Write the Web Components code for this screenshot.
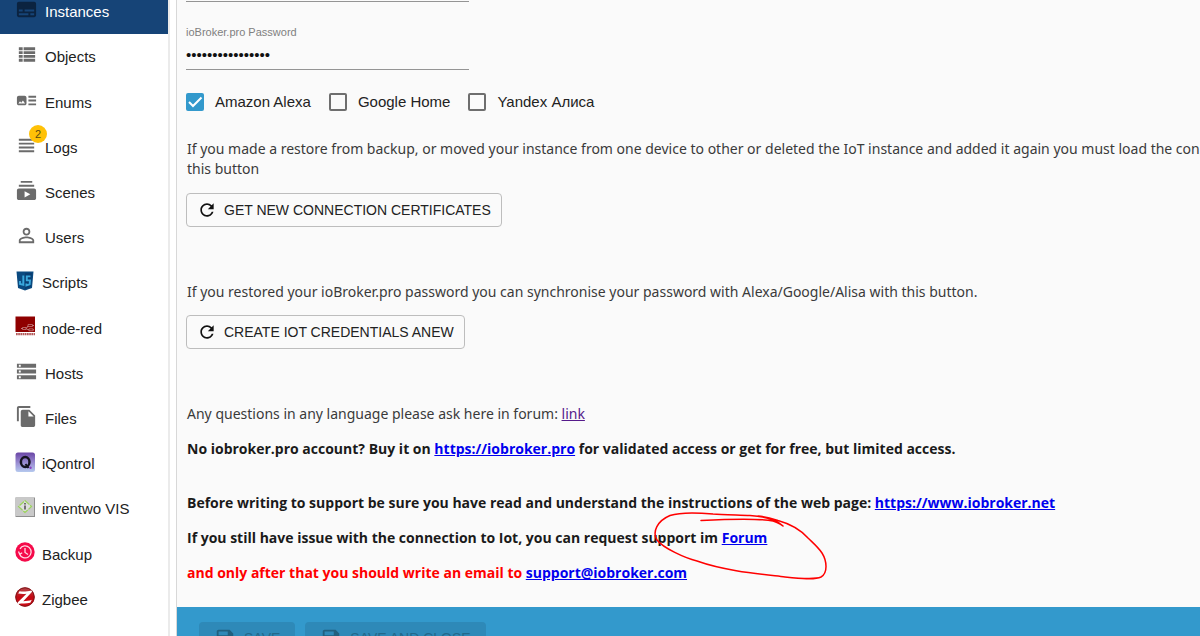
<!DOCTYPE html>
<html lang="en">
<head>
<meta charset="utf-8">
<meta name="viewport" content="width=device-width, initial-scale=1">
<title>ioBroker admin</title>
<style>
  html, body { margin: 0; height: 100%; overflow: hidden; }
  body { background: #fff; color: #222; font-family: "Liberation Sans", Arial, sans-serif; font-size: 15px; }
</style>
</head>
<body>
<io-app>
  <io-sidebar slot="nav">
    <io-nav-item icon="instances" active>Instances</io-nav-item>
    <io-nav-item icon="objects">Objects</io-nav-item>
    <io-nav-item icon="enums">Enums</io-nav-item>
    <io-nav-item icon="logs" badge="2">Logs</io-nav-item>
    <io-nav-item icon="scenes">Scenes</io-nav-item>
    <io-nav-item icon="users">Users</io-nav-item>
    <io-nav-item icon="scripts">Scripts</io-nav-item>
    <io-nav-item icon="nodered">node-red</io-nav-item>
    <io-nav-item icon="hosts">Hosts</io-nav-item>
    <io-nav-item icon="files">Files</io-nav-item>
    <io-nav-item icon="iqontrol">iQontrol</io-nav-item>
    <io-nav-item icon="inventwo">inventwo VIS</io-nav-item>
    <io-nav-item icon="backup">Backup</io-nav-item>
    <io-nav-item icon="zigbee">Zigbee</io-nav-item>
  </io-sidebar>
  <io-settings></io-settings>
  <io-actions slot="footer">
    <io-button icon="save" disabled>SAVE</io-button>
    <io-button icon="save" disabled>SAVE AND CLOSE</io-button>
  </io-actions>
</io-app>

<script>
const mono = d => `<svg class="m" viewBox="0 0 24 24" aria-hidden="true"><path fill="currentColor" d="${d}"/></svg>`;
const pic = body => `<svg class="p" viewBox="0 0 20 20" aria-hidden="true">${body}</svg>`;
const ICONS = {
  instances: mono("M20 4H4c-1.1 0-2 .9-2 2v12c0 1.1.9 2 2 2h16c1.1 0 2-.9 2-2V6c0-1.1-.9-2-2-2zM4 12h4v2H4v-2zm10 6H4v-2h10v2zm6 0h-4v-2h4v2zm0-4H10v-2h10v2z"),
  objects: mono("M4 4.5h4v3H4zM9 4.5h12v3H9zM4 8.5h4v3H4zM9 8.5h12v3H9zM4 12.5h4v3H4zM9 12.5h12v3H9zM4 16.5h4v3H4zM9 16.5h12v3H9z"),
  enums: mono("M22 13h-8v-2h8v2zm0-6h-8v2h8V7zm-8 10h8v-2h-8v2zm-2-8v6c0 1.1-.9 2-2 2H4c-1.1 0-2-.9-2-2V9c0-1.1.9-2 2-2h6c1.1 0 2 .9 2 2zm-1.500 6l-2.250-3-1.750 2.260-1.250-1.510L3.500 15h7z"),
  logs: mono("M4 15h16v-2H4v2zm0 4h16v-2H4v2zm0-8h16V9H4v2zm0-6v2h16V5H4z"),
  scenes: mono("M20 8H4V6h16v2zm-2-6H6v2h12V2zm4 10v8c0 1.1-.9 2-2 2H4c-1.1 0-2-.9-2-2v-8c0-1.1.9-2 2-2h16c1.1 0 2 .9 2 2zm-6 4l-6-3.27v6.53L16 16z"),
  users: mono("M12 5.9c1.16 0 2.1.94 2.1 2.1s-.94 2.1-2.1 2.1S9.900 9.160 9.900 8s.94-2.100 2.100-2.100m0 9c2.970 0 6.100 1.460 6.100 2.100v1.100H5.900V17c0-.64 3.130-2.100 6.100-2.100M12 4C9.790 4 8 5.790 8 8s1.790 4 4 4 4-1.790 4-4-1.790-4-4-4zm0 9c-2.670 0-8 1.340-8 4v3h16v-3c0-2.660-5.330-4-8-4z"),
  hosts: mono("M2 20h20v-4H2v4zm2-3h2v2H4v-2zM2 4v4h20V4H2zm4 3H4V5h2v2zm-4 7h20v-4H2v4zm2-3h2v2H4v-2z"),
  files: mono("M16 1H4c-1.1 0-2 .9-2 2v14h2V3h12V1zm-1 4l6 6v10c0 1.1-.9 2-2 2H7.990C6.890 23 6 22.100 6 21V7c0-1.100.89-2 1.990-2h7zm-1 7h5.500L14 6.500V12z"),
  refresh: mono("M17.65 6.35C16.2 4.9 14.21 4 12 4c-4.42 0-7.99 3.58-7.99 8s3.57 8 7.99 8c3.73 0 6.84-2.55 7.73-6h-2.08c-.82 2.33-3.04 4-5.65 4-3.31 0-6-2.69-6-6s2.69-6 6-6c1.66 0 3.14.69 4.22 1.78L13 11h7V4l-2.35 2.35z"),
  save: mono("M17 3H5c-1.11 0-2 .9-2 2v14c0 1.1.89 2 2 2h14c1.1 0 2-.9 2-2V7l-4-4zm-5 16c-1.66 0-3-1.34-3-3s1.34-3 3-3 3 1.34 3 3-1.34 3-3 3zm3-10H5V5h10v4z"),
  scripts: pic(`<path fill="#0b4a80" d="M1.500 .5h17l-1.500 16.500-7 2.500-7-2.500z"/><path fill="#0a3d70" d="M10 2h7l-1.300 14-5.700 2z"/><path fill="none" stroke="#3aa8dc" stroke-width="1.900" d="M8.300 4.500v9.300L5 13v-3M15.500 5.400h-3.700v4h3.200l-.3 4-3.300 1v-2"/>`),
  nodered: pic(`<path fill="#8f0000" d="M.5 .5h19.500v15.500H.5z"/><path fill="none" stroke="#c98a8a" stroke-width=".9" d="M6 12.500h4c3 0 2-3 4-3h5M10 12.500c2 0 2 1.300 4 1.300h5"/><path fill="#8f0000" stroke="#c98a8a" stroke-width=".7" d="M7.500 11.500h3.500v2H7.500zM13 8.500h4.500v2H13zM14 12.800h4v2h-4z"/><path fill="none" stroke="#b45a5a" stroke-width="2.200" stroke-dasharray="1.700 .5" d="M1 18.200h19"/>`),
  iqontrol: pic(`<defs><linearGradient id="q" x2="0" y2="1"><stop stop-color="#6a45a5"/><stop offset=".55" stop-color="#9b8fd3"/><stop offset="1" stop-color="#b5c9ee"/></linearGradient></defs><rect x=".5" y=".5" width="19.500" height="19.500" rx="2.500" fill="url(#q)"/><ellipse cx="10.200" cy="10" rx="4.300" ry="5" fill="none" stroke="#151320" stroke-width="2.500"/><path stroke="#151320" stroke-width="2" d="M10.500 12l3 4"/><circle cx="15.500" cy="15.700" r="1.200" fill="#8a3fc0"/>`),
  inventwo: pic(`<path fill="#8e8e8e" d="M.5 .5H20V20H.5z"/><path fill="#c9c9c9" d="M.5 .5H19V19H.5z"/><path fill="#dedede" stroke="#9ad45a" stroke-width="1.200" stroke-dasharray="6 1" d="M10 3.500l6.500 6-6.500 6-6.500-6z"/><path stroke="#555" stroke-width="1.600" d="M10 8.500v4M10 6v1.500"/>`),
  backup: pic(`<circle cx="10" cy="10" r="9.700" fill="#f50a4a"/><path fill="none" stroke="#ffdbe5" stroke-width="1.300" d="M4.500 12A6 6 0 1 0 5 6.800M3.500 9.500l1.200 2.800 2.500-1.500M10 6v4.500l3 2"/>`),
  zigbee: pic(`<defs><linearGradient id="z" x2="0" y2="1"><stop stop-color="#b5484c"/><stop offset=".5" stop-color="#c40a14"/><stop offset="1" stop-color="#d00c16"/></linearGradient></defs><circle cx="10" cy="10" r="9.700" fill="url(#z)"/><circle cx="10" cy="10" r="9.200" fill="none" stroke="#7d1518" stroke-width="1"/><path fill="#fff" d="M4.500 4.200c4 .8 7.500 .3 12-.8l.6 1.300-8.800 9.500c3-.3 6-.4 8.500-1.500l-1.500 3c-4 1.200-8 .3-12.300 1.200L2.600 15.500 11.500 6.700c-3 .5-5.500 .2-8.300-.1z"/>`)
};

const define = (name, html, setup) => customElements.define(name, class extends HTMLElement {
  constructor() {
    super();
    const t = document.createElement("template");
    t.innerHTML = html;
    this.attachShadow({ mode: "open" }).append(t.content.cloneNode(true));
  }
  connectedCallback() { if (setup) setup(this, this.shadowRoot); }
});

define("io-app", `
  <style>
    :host { display: flex; height: 100vh; overflow: hidden; }
    .gutter { flex: none; width: 6px; border-left: 2px solid #ebebeb; border-right: 1px solid #d8d8d8; }
    main { flex: 1; min-width: 0; background: #fafafa; overflow: hidden; }
  </style>
  <slot name="nav"></slot>
  <div class="gutter"></div>
  <main><slot></slot><slot name="footer"></slot></main>`);

define("io-sidebar", `
  <style>
    :host { display: flex; flex: none; width: 168px; }
    nav { flex: 1; display: grid; grid-auto-rows: 1fr; margin: -11px 0 14px; }
  </style>
  <nav><slot></slot></nav>`);

define("io-nav-item", `
  <style>
    :host { display: grid; color: #222; }
    a { display: flex; align-items: center; padding-left: 15px; color: inherit; text-decoration: none; }
    .icon { position: relative; display: flex; margin: 0 7px 4px 0; color: #6b6b6b; }
    svg.m { width: 23px; height: 23px; }
    svg.p { width: 20px; height: 20px; }
    .badge { position: absolute; top: -9px; right: -9px; width: 18px; height: 18px; border-radius: 50%;
      background: #ffc107; color: #5a4a10; font-size: 11px; line-height: 18px; text-align: center; }
    :host([active]) { background: #164477; color: #fff; }
    :host([active]) .icon { color: #0b2340; }
  </style>
  <a href="#"><span class="icon"></span><slot></slot></a>`,
  (el, root) => {
    const icon = root.querySelector(".icon");
    icon.innerHTML = ICONS[el.getAttribute("icon")];
    if (el.hasAttribute("badge")) {
      const b = document.createElement("span");
      b.className = "badge";
      b.textContent = el.getAttribute("badge");
      icon.append(b);
    }
  });

define("io-field", `
  <style>
    :host { display: block; width: 283px; }
    label { display: block; font-size: 11px; line-height: 16px; color: #808080; }
    input { display: block; box-sizing: border-box; width: 100%; height: 30px; margin: 0; padding: 0; border: 0;
      border-bottom: 1px solid #949494; background: none; outline: 0; color: #111; font: 15px "Liberation Sans", Arial, sans-serif; }
  </style>
  <label for="f"></label><input id="f" type="password" autocomplete="off">`,
  (el, root) => {
    root.querySelector("label").textContent = el.getAttribute("label");
    root.querySelector("input").value = el.getAttribute("value");
  });

define("io-check", `
  <style>
    :host { display: block; }
    label { display: flex; align-items: center; gap: 11px; line-height: 20px; }
    input { appearance: none; flex: none; width: 18px; height: 18px; margin: 0; border: 2px solid #6e6e6e; border-radius: 2px; }
    input:checked { border-color: #3399cc; background: #3399cc; }
    .box { position: relative; display: flex; }
    svg { position: absolute; inset: 0; display: none; pointer-events: none; }
    input:checked + svg { display: block; }
  </style>
  <label><span class="box"><input type="checkbox"><svg viewBox="0 0 18 18" aria-hidden="true"><path d="M3 9l4 4 8.500-8.500" fill="none" stroke="#fff" stroke-width="2"/></svg></span><slot></slot></label>`,
  (el, root) => { root.querySelector("input").checked = el.hasAttribute("checked"); });

define("io-button", `
  <style>
    :host { display: inline-block; vertical-align: top; }
    button { display: flex; align-items: center; gap: 7px; height: 34px; padding: 0 10px; border: 1px solid #bdbdbd; border-radius: 4px;
      background: none; color: #222; font: 14px "Liberation Sans", Arial, sans-serif; white-space: nowrap; }
    svg { width: 20px; height: 20px; color: #111; }
    button:disabled { height: 31px; gap: 8px; padding: 0 15px; border: 0; background: #2e89b8; color: #22688b; }
    button:disabled svg { width: 22px; height: 22px; color: #20607f; }
  </style>
  <button type="button"><slot></slot></button>`,
  (el, root) => {
    const b = root.querySelector("button");
    b.disabled = el.hasAttribute("disabled");
    b.insertAdjacentHTML("afterbegin", ICONS[el.getAttribute("icon")]);
  });

define("io-actions", `
  <style>
    :host { display: flex; gap: 10px; padding: 15px 22px; background: #3399cc; }
  </style>
  <slot></slot>`);

define("io-settings", `
  <style>
    :host { display: block; position: relative; padding: 1px 0 24px 9px; white-space: nowrap; }
    .rule { width: 283px; height: 1px; background: #949494; }
    io-field { margin-top: 22px; }
    .checks { display: flex; gap: 18px; margin-top: 22px; }
    p, h2 { margin: 0; padding-left: 1px; font: 14px/20px "Noto Sans", "Open Sans", sans-serif; color: #3a3a3a; }
    h2 { font-family: "Open Sans", "Noto Sans", sans-serif; font-weight: 700; color: #1a1a1a; margin-top: 15px; }
    .restore { margin-top: 27px; }
    .sync, .ask { margin-top: 55px; }
    io-button { margin-top: 14px; }
    .sync + io-button { margin-top: 13px; }
    .before { margin-top: 34px; }
    .warn { color: #f00; }
    a { color: #00e; }
    a.seen { color: #551a8b; }
    .ring { position: absolute; left: 474px; top: 509px; width: 180px; height: 74px; pointer-events: none; }
  </style>
  <div class="rule"></div>
  <io-field label="ioBroker.pro Password" value="abcdefghijklmnop"></io-field>
  <div class="checks">
    <io-check checked>Amazon Alexa</io-check>
    <io-check>Google Home</io-check>
    <io-check>Yandex Алиса</io-check>
  </div>
  <p class="restore">If you made a restore from backup, or moved your instance from one device to other or deleted the IoT instance and added it again you must load the connection<br>this button</p>
  <io-button icon="refresh">GET NEW CONNECTION CERTIFICATES</io-button>
  <p class="sync">If you restored your ioBroker.pro password you can synchronise your password with Alexa/Google/Alisa with this button.</p>
  <io-button icon="refresh">CREATE IOT CREDENTIALS ANEW</io-button>
  <p class="ask">Any questions in any language please ask here in forum: <a class="seen" href="#">link</a></p>
  <h2>No iobroker.pro account? Buy it on <a href="#">https://iobroker.pro</a> for validated access or get for free, but limited access.</h2>
  <h2 class="before">Before writing to support be sure you have read and understand the instructions of the web page: <a href="#">https://www.iobroker.net</a></h2>
  <h2>If you still have issue with the connection to Iot, you can request support im <a href="#">Forum</a></h2>
  <h2 class="warn">and only after that you should write an email to <a href="#">support@iobroker.com</a></h2>
  <svg class="ring" viewBox="651 509 180 74" aria-hidden="true"><path fill="none" stroke="#f00" stroke-width="1.500" stroke-linecap="round" stroke-linejoin="round" d="M701 520.500C720 519.500 758 518 773 521C777 522 780 524 783 526C778 522 772 517 750 515.500C738 515 722 514.500 713 514C697 512.500 679 512.500 670 515.500C657 521 652 532 657 540C663 548 685 558 697 561C725 571 760 574 785 577C800 578.500 815 580 821 577C828 573 827 561 822 553C818 547 813 543 808 538C799 528 787 523 778 520.500C772 518.500 766 516.500 758 516"/></svg>`);
</script>
</body>
</html>
